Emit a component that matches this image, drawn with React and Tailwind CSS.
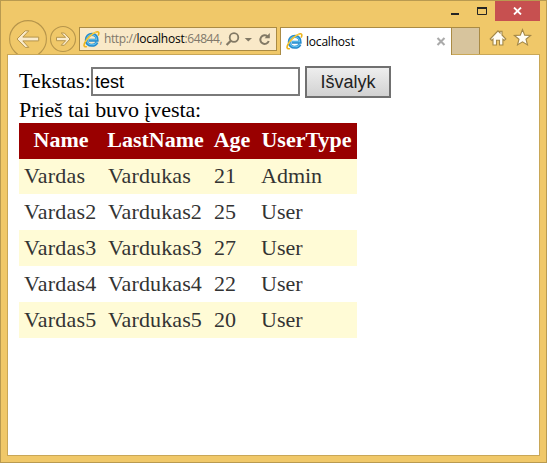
import React from 'react';

const rows = [
  ['Vardas', 'Vardukas', '21', 'Admin'],
  ['Vardas2', 'Vardukas2', '25', 'User'],
  ['Vardas3', 'Vardukas3', '27', 'User'],
  ['Vardas4', 'Vardukas4', '22', 'User'],
  ['Vardas5', 'Vardukas5', '20', 'User'],
];

function BrowserLogo() {
  return (
    <svg width="17" height="17" viewBox="0 0 17 17" className="shrink-0" fill="none">
      <path d="M14 11.2C12.9 13.4 11.1 14.3 8.8 14.3C5.4 14.3 3.3 12.1 3.3 9C3.3 5.6 5.7 3.4 9 3.4C12.5 3.4 14.2 5.8 14.1 9.3H5.5" stroke="#268acb" strokeWidth="3.1" />
      <path d="M13.6 11.2C12.6 13.1 10.9 13.8 9 13.8C5.9 13.8 3.8 11.9 3.8 9C3.8 5.9 6 3.9 9 3.9C12 3.9 13.6 6 13.6 8.8H6" stroke="#62c3ef" strokeWidth="1.1" />
      <path d="M3.3 15.7C.8 16.2.4 14.3 2 11.3C4.2 7 9.6 2 13.3 1C15.8.3 16.3 1.8 15.4 4" stroke="#edb51c" strokeWidth="1.6" strokeLinecap="round" />
      <path d="M2.5 11C5 6.5 9.7 2.4 13.4 1.1" stroke="#ffe263" strokeWidth=".7" />
    </svg>
  );
}

function NavButtons() {
  return (
    <svg width="72" height="34" viewBox="0 0 72 34" className="block" fill="none" stroke="#b6954b">
      <circle cx="21" cy="19" r="18.4" strokeWidth="1.1" />
      <path d="M10 19L18.2 10.8H21.8L15.8 17.1H31.7V20.9H15.8L21.8 27.4H18.2Z" fill="#faebcb" strokeLinejoin="round" />
      <circle cx="56" cy="19" r="12.5" strokeWidth="1.1" />
      <path d="M63 19L57.3 13H54.2L58.6 17.3H49.5V20.7H58.6L54.2 25.3H57.3Z" fill="#faebcb" strokeLinejoin="round" />
    </svg>
  );
}

function Toolbar() {
  return (
    <div className="flex h-[53px] items-start">
      <div className="ml-[6px] mt-[19px] h-[34px] w-[72px] overflow-hidden"><NavButtons /></div>
      <div className="mt-[26px] flex h-[24px] w-[198px] items-center border border-[#aa8b44] bg-[#f9e9c8] pl-[3px] font-['Open_Sans',sans-serif] text-[12px]">
        <BrowserLogo />
        <div className="ml-[4px] w-[118px] shrink-0 whitespace-nowrap leading-[22px] tracking-[-0.4px] text-[#80786a]">
          http://<span className="tracking-[-0.25px] text-black">localhost</span>:64844,
        </div>
        <svg width="54" height="20" viewBox="0 0 54 20" className="shrink-0" fill="none" stroke="#827965">
          <circle cx="12" cy="8.5" r="4.3" strokeWidth="1.8" />
          <path d="M8.8 11.8L4.6 16" strokeWidth="2.3" />
          <path d="M22.7 9H30L26.3 12.6Z" fill="#827965" stroke="none" />
          <path d="M45.5 7.4A4.3 4.3 0 1 0 46.7 12" strokeWidth="2" />
          <path d="M47.8 4V9.2H42.6Z" fill="#827965" stroke="none" />
        </svg>
      </div>
      <div className="ml-[3px] mt-[26px] flex h-[28px] w-[172px] shrink-0 border border-b-0 border-[#aa8b44] bg-white font-['Open_Sans',sans-serif] text-[12px] text-black">
        <div className="ml-[5px] mt-[5px]"><BrowserLogo /></div>
        <div className="ml-[3px] mt-[4px] w-[60px] leading-[20px] tracking-[-0.2px]">localhost</div>
        <svg width="10" height="10" viewBox="0 0 10 10" className="ml-[70px] mt-[9px]" stroke="#aaa" strokeWidth="2.1">
          <path d="M1.5 1L8.5 8M8.5 1L1.5 8" />
        </svg>
      </div>
      <div className="-ml-px mt-[26px] h-[27px] w-[29px] shrink-0 border border-b-0 border-[#aa8b44] bg-[#d7c49d]" />
      <svg width="50" height="24" viewBox="0 0 50 24" className="ml-[8px] mt-[23px] shrink-0" fill="#fffdf5" stroke="#a38746" strokeWidth="1.1">
        <path d="M2.2 15L10 6.8L12 8.9V7.2H14V11L17.8 15L16.2 16.4L14.9 15.2V21H11.5V16.3H8.5V21H5V15.2L3.8 16.4Z" />
        <path d="M34.5 5.6L36.7 11.1L42.6 11.5L38 15.2L39.5 20.9L34.5 17.8L29.5 20.9L31 15.2L26.4 11.5L32.3 11.1Z" />
      </svg>
    </div>
  );
}

function WindowControls() {
  return (
    <div className="absolute right-[6px] top-0 flex h-5">
      <svg width="44" height="20" viewBox="0 0 44 20" fill="none" stroke="#242424">
        <path d="M0 13H8" strokeWidth="2" />
        <path d="M26 7H36" strokeWidth="2" />
        <path d="M26.5 7V13.5H35.5V7" />
      </svg>
      <div className="flex h-5 w-[45px] items-center justify-center bg-[#c75050]">
        <svg width="9" height="8" viewBox="0 0 9 8" stroke="white" strokeWidth="1.8"><path d="M1 .5L8 7.5M8 .5L1 7.5" /></svg>
      </div>
    </div>
  );
}

export default function App() {
  return (
    <div className="relative h-[463px] w-[547px] overflow-hidden border border-[#b99a50] bg-[#f0c869]">
      <Toolbar />
      <WindowControls />
      <main className="ml-[6px] h-[402px] w-[533px] border border-[#c9a757] bg-white pl-[11px] pt-[11px] font-['Liberation_Serif',serif] text-[22px] text-black">
        <div className="flex h-[32px]">
          <label className="w-[72px] whitespace-nowrap leading-[30px]">Tekstas:</label>
          <input className="mt-px h-[29px] w-[209px] border-2 border-[#7a7a7a] bg-white px-[2px] pt-[2px] font-['Liberation_Sans',sans-serif] text-[18px] leading-[23px] outline-none" defaultValue="test" />
          <button className="ml-[5px] h-[32px] w-[86px] border-2 border-[#707070] bg-linear-to-b from-[#eeeeee] to-[#d2d2d2] font-['Liberation_Sans',sans-serif] text-[18px] leading-[28px] text-[#222]">Išvalyk</button>
        </div>
        <div className="h-[25px] leading-[23px] tracking-[-0.08px]">Prieš tai buvo įvesta:</div>
        <table className="w-[338px] table-fixed border-collapse">
          <colgroup><col className="w-[84px]" /><col className="w-[105px]" /><col className="w-[48px]" /><col className="w-[101px]" /></colgroup>
          <thead>
            <tr className="h-[36px] bg-[#990000] text-white">
              {['Name', 'LastName', 'Age', 'UserType'].map((h) => <th key={h} className="whitespace-nowrap p-0 pb-[2px] text-center font-bold leading-[32px]">{h}</th>)}
            </tr>
          </thead>
          <tbody>
            {rows.map((row, i) => (
              <tr key={row[0]} className={i === 0 ? 'h-[35px] bg-[#fffbd6] leading-[32px]' : i % 2 ? 'h-[36px] bg-white leading-[34px]' : 'h-[36px] bg-[#fffbd6] leading-[34px]'}>
                {row.map((c, j) => <td key={c} className={`p-0 text-[#333] ${i === 0 ? 'pb-[2px]' : ''} ${j === 0 ? 'pl-[5px] tracking-[0.25px]' : j === 1 ? 'pl-[5px] tracking-[0.12px]' : j === 2 ? 'pl-[6px]' : 'pl-[5px]'}`}>{c}</td>)}
              </tr>
            ))}
          </tbody>
        </table>
      </main>
    </div>
  );
}
